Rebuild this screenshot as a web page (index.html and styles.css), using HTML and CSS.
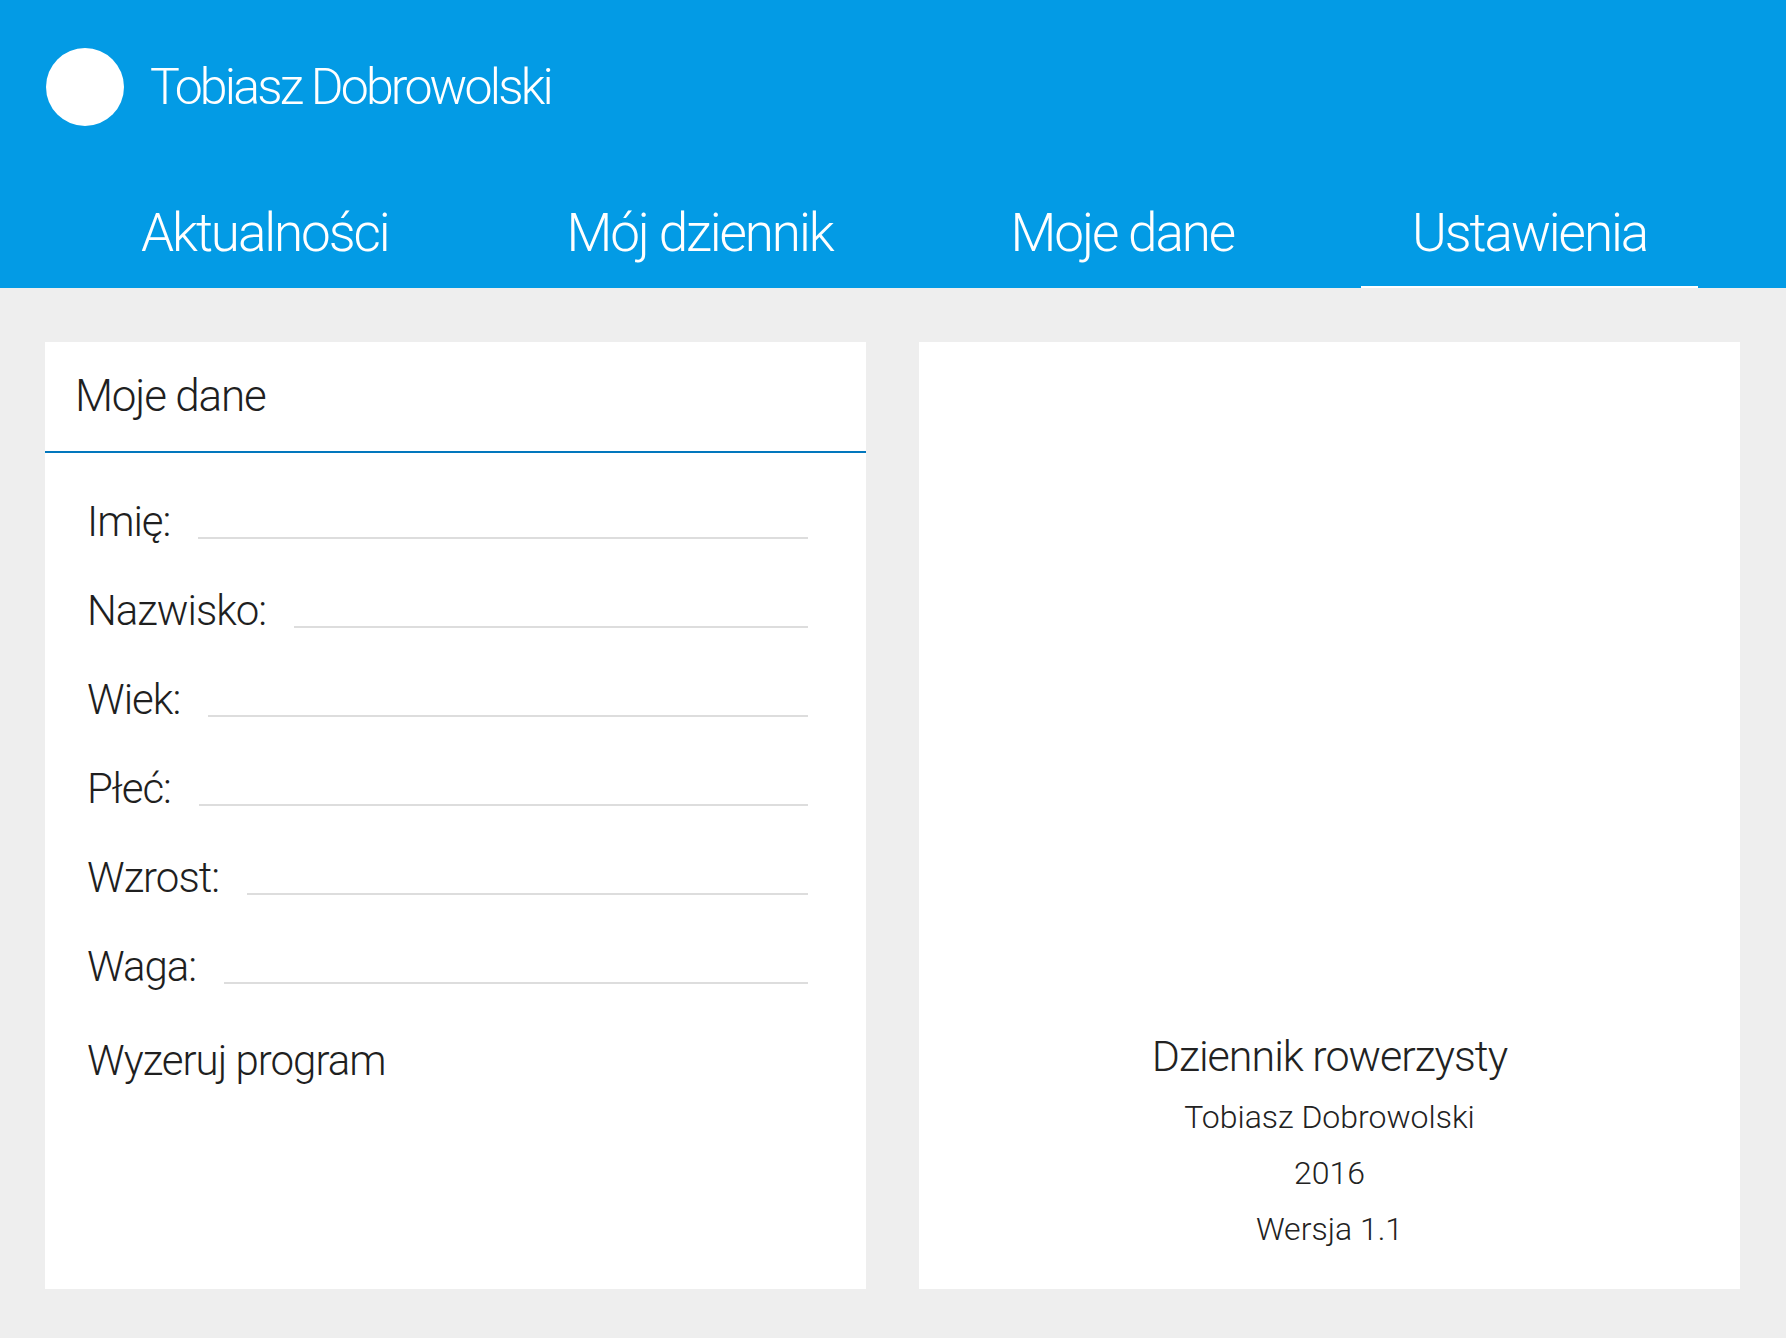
FILE: index.html
```html
<!DOCTYPE html>
<html lang="pl">
<head>
<meta charset="utf-8">
<title>Dziennik rowerzysty</title>
<link rel="stylesheet" href="styles.css">
</head>
<body>
<header class="topbar">
  <div class="profile">
    <div class="avatar"></div>
    <div class="user-name">Tobiasz Dobrowolski</div>
  </div>
  <nav class="tabs">
    <a class="tab">Aktualności</a>
    <a class="tab">Mój dziennik</a>
    <a class="tab">Moje dane</a>
    <a class="tab active">Ustawienia</a>
  </nav>
</header>
<main class="content">
  <section class="card">
    <div class="card-title">Moje dane</div>
    <div class="form">
      <div class="row"><label class="label">Imię:</label><input class="field" type="text"></div>
      <div class="row"><label class="label">Nazwisko:</label><input class="field" type="text"></div>
      <div class="row"><label class="label">Wiek:</label><input class="field" type="text"></div>
      <div class="row"><label class="label">Płeć:</label><input class="field" type="text"></div>
      <div class="row"><label class="label">Wzrost:</label><input class="field" type="text"></div>
      <div class="row"><label class="label">Waga:</label><input class="field" type="text"></div>
      <div class="row reset"><span class="label">Wyzeruj program</span></div>
    </div>
  </section>
  <section class="card about">
    <div class="about-title">Dziennik rowerzysty</div>
    <div class="about-line">Tobiasz Dobrowolski</div>
    <div class="about-line">2016</div>
    <div class="about-line">Wersja 1.1</div>
  </section>
</main>
</body>
</html>
```

FILE: styles.css
```css
html, body {
  margin: 0;
  padding: 0;
}
body {
  background: #eeeeee;
  font-family: Roboto, "Liberation Sans", sans-serif;
  color: #1f1f1f;
  width: 1786px;
  height: 1338px;
  overflow: hidden;
}
.topbar {
  background: #039be5;
  color: #ffffff;
  display: flex;
  flex-direction: column;
}
.profile {
  display: flex;
  align-items: center;
  padding: 48px 0 0 46px;
  height: 78px;
}
.avatar {
  width: 78px;
  height: 78px;
  border-radius: 50%;
  background: #ffffff;
}
.user-name {
  margin-left: 26px;
  font-size: 50px;
  font-weight: 300;
  line-height: 78px;
  letter-spacing: -2.8px;
}
.tabs {
  display: flex;
  margin-top: 75px;
  padding-left: 90px;
  gap: 76px;
}
.tab {
  font-size: 53px;
  font-weight: 300;
  line-height: 64px;
  padding: 0 51px 21px;
  border-bottom: 2px solid transparent;
  letter-spacing: -2.1px;
}
.tab.active {
  border-bottom-color: #ffffff;
}
.content {
  display: flex;
  gap: 53px;
  padding: 54px 46px 0 45px;
}
.card {
  background: #ffffff;
  width: 821px;
  height: 947px;
  display: flex;
  flex-direction: column;
}
.card-title {
  height: 109px;
  line-height: 109px;
  font-size: 44px;
  font-weight: 300;
  padding-left: 30px;
  border-bottom: 2px solid #0277bd;
  letter-spacing: -1.2px;
}
.form {
  padding: 44px 58px 0 42px;
  display: flex;
  flex-direction: column;
}
.row {
  display: flex;
  align-items: flex-end;
  height: 50px;
  margin-bottom: 39px;
}
.row.reset {
  margin-top: 5px;
}
.label {
  font-size: 42px;
  font-weight: 300;
  line-height: 50px;
  letter-spacing: -1px;
  white-space: nowrap;
}
.field {
  flex: 1;
  margin: 0 0 8px 28px;
  height: 30px;
  padding: 0;
  border: none;
  border-bottom: 2px solid #dddddd;
  background: transparent;
  outline: none;
}
.about {
  justify-content: flex-end;
  align-items: center;
  padding-bottom: 32px;
  box-sizing: border-box;
  color: #222222;
}
.about-title {
  font-size: 43px;
  font-weight: 300;
  line-height: 56px;
  margin-bottom: 5px;
  letter-spacing: -1px;
}
.about-line {
  font-size: 32px;
  font-weight: 300;
  line-height: 56px;
}
```
